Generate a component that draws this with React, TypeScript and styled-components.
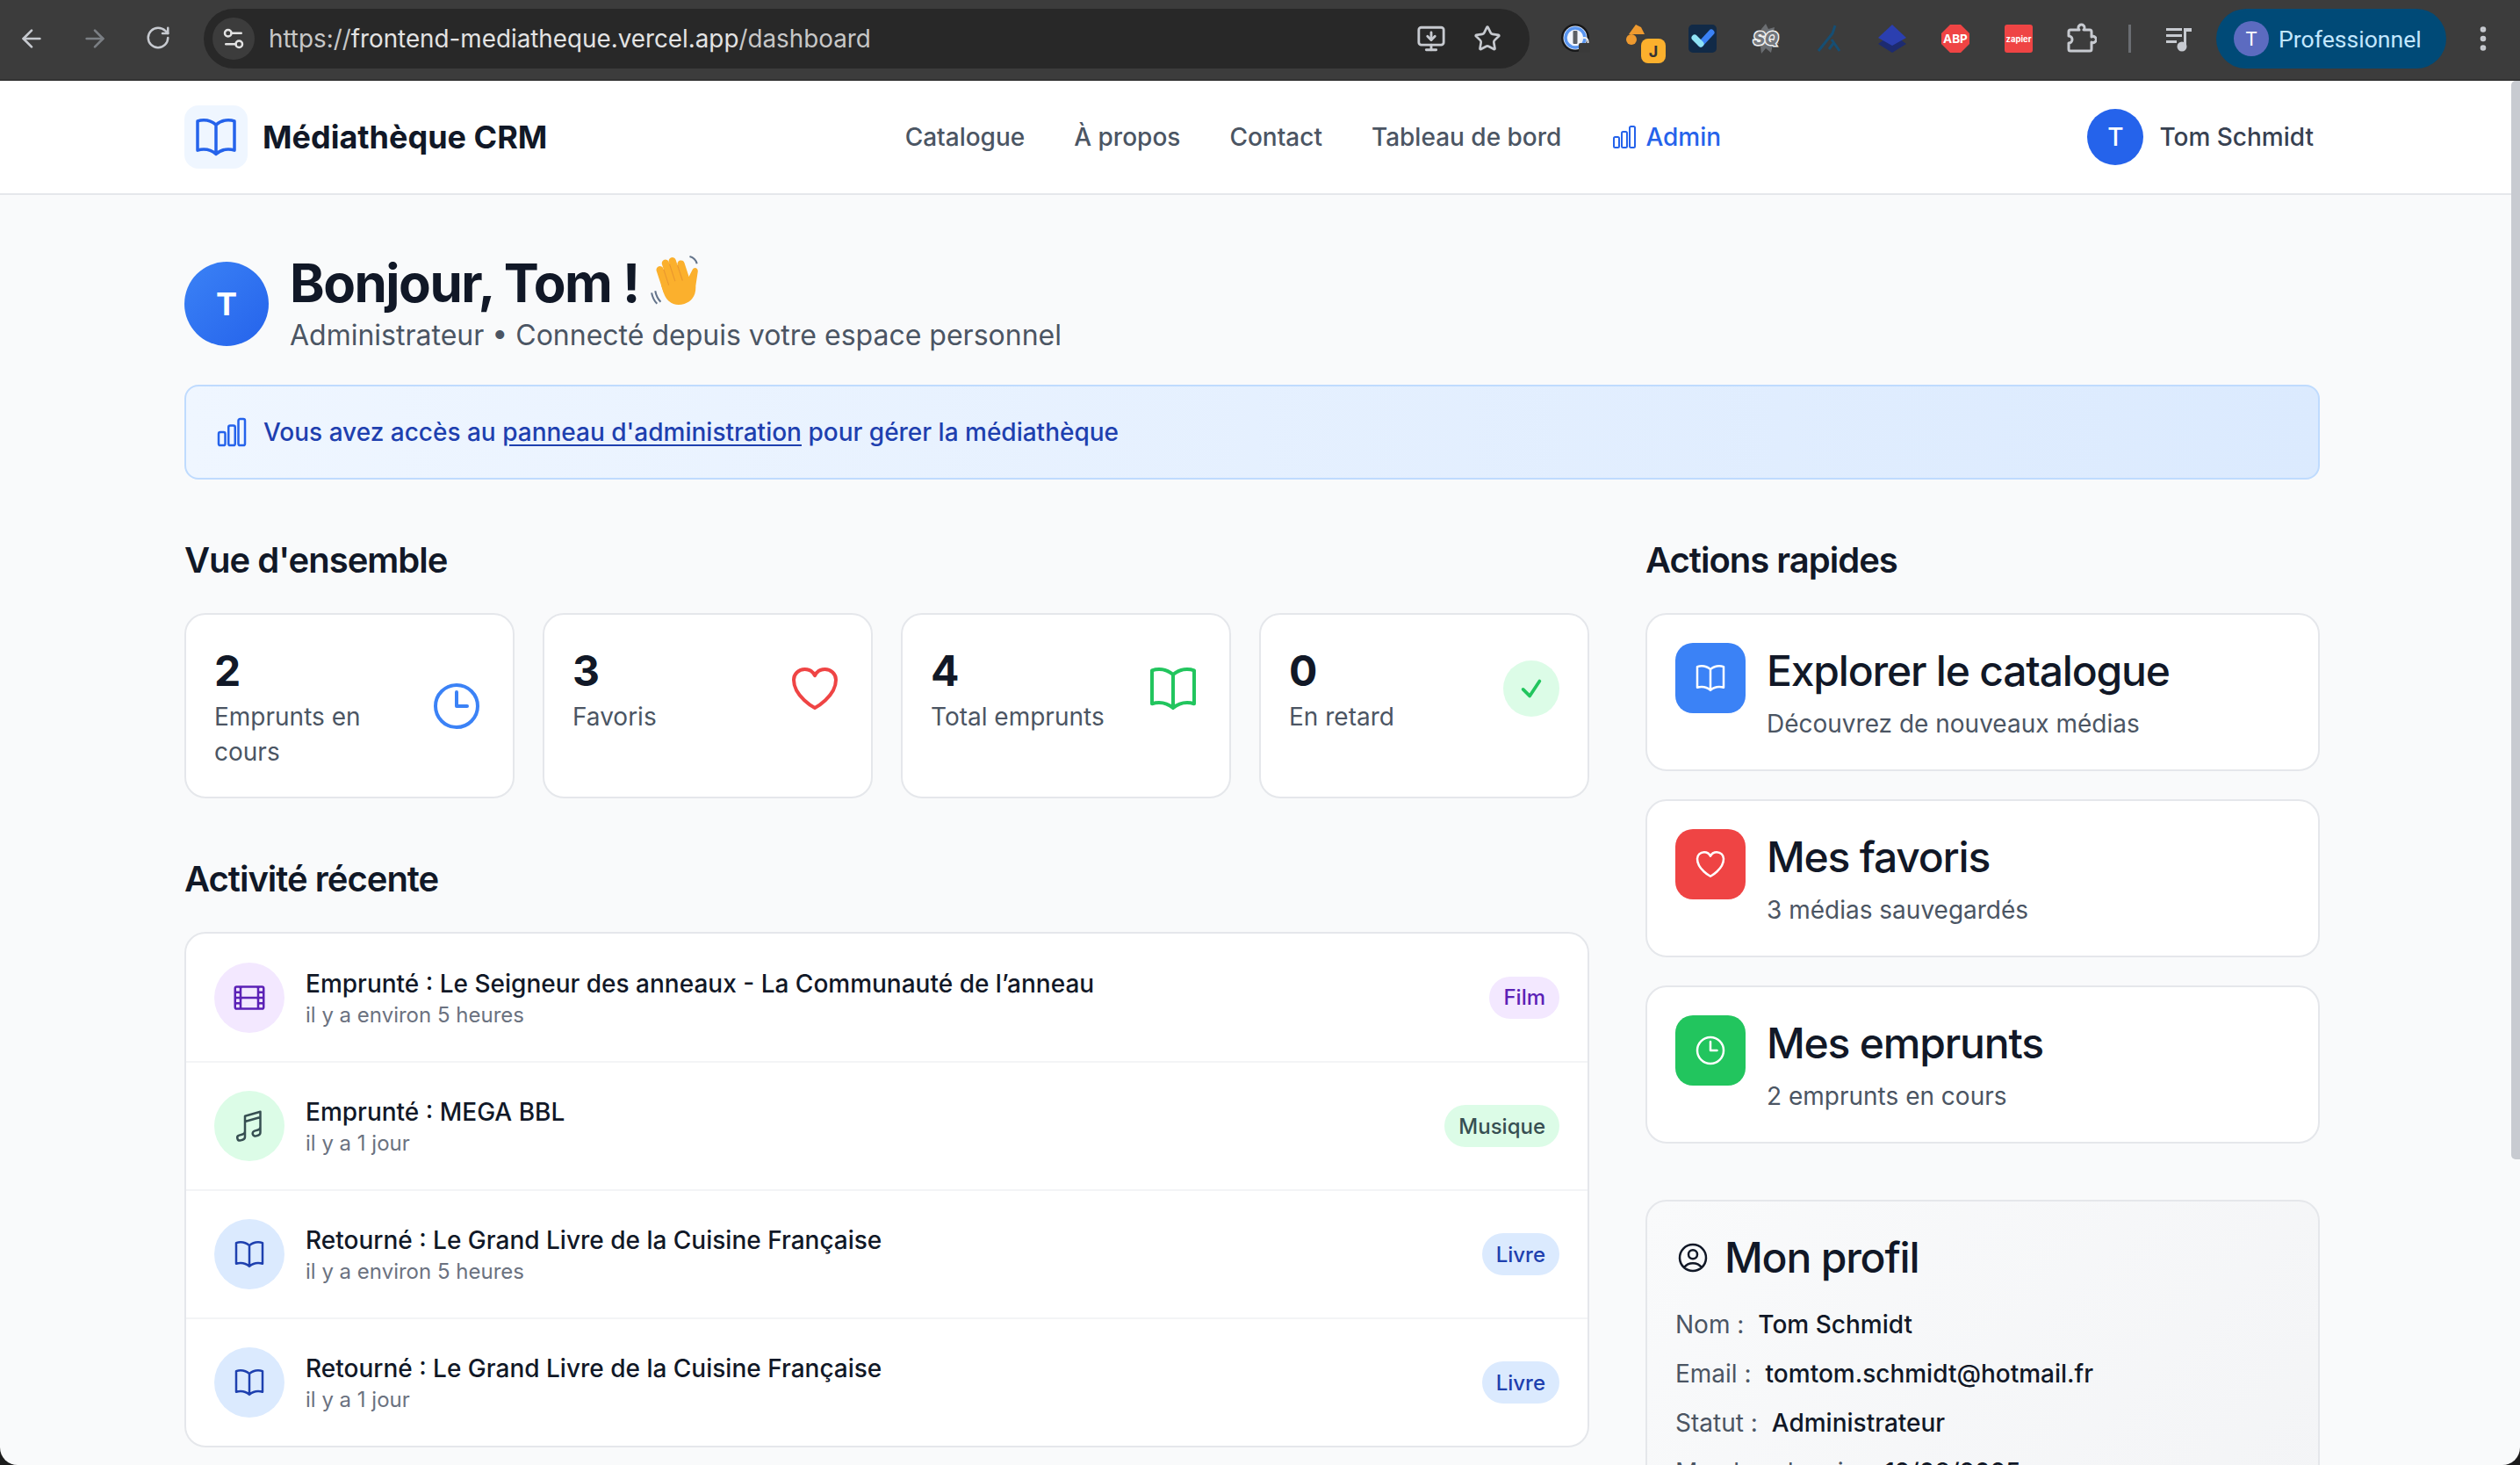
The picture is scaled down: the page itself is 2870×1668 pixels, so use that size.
import React from 'react';
import styled, {createGlobalStyle} from 'styled-components';
import {
  ArrowLeft,
  ArrowRight,
  RotateCw,
  Settings2,
  MonitorDown,
  Star,
  EllipsisVertical,
} from 'lucide-react';
import {
  HiOutlineBookOpen,
  HiOutlineChartBar,
  HiOutlineClock,
  HiOutlineHeart,
  HiOutlineCheck,
  HiOutlineFilm,
  HiOutlineMusicalNote,
  HiOutlineUserCircle,
} from 'react-icons/hi2';

const GlobalStyle = createGlobalStyle`
  html, body {
    margin: 0;
    padding: 0;
    height: 100%;
    background: #1c1c1c;
    overflow: hidden;
  }
  * {
    box-sizing: border-box;
  }
  #root {
    height: 100%;
  }
`;

const Window = styled.div`
  position: relative;
  height: 1668px;
  overflow: hidden;
  border-radius: 0 0 20px 20px;
  background: #f9fafb;
  font-family: Inter, 'Noto Sans', sans-serif;
  color: #111827;
`;

/* browser chrome */

const BrowserBar = styled.div`
  height: 92px;
  background: #3c3c3c;
  border-bottom: 2px solid #333;
  display: flex;
  align-items: center;
  padding: 0 0 2px;
`;

const NavButton = styled.div<{$dim?: boolean}>`
  width: 72px;
  display: flex;
  justify-content: center;
  color: ${(p) => (p.$dim ? '#7b7f84' : '#c7cad0')};
`;

const NavGroup = styled.div`
  display: flex;
  width: 232px;
`;

const Omnibox = styled.div`
  width: 1510px;
  height: 68px;
  border-radius: 34px;
  background: #282828;
  display: flex;
  align-items: center;
  padding: 0 10px;
  color: #c7cad0;
`;

const SiteChip = styled.div`
  width: 48px;
  height: 48px;
  border-radius: 50%;
  background: #3c3c3c;
  display: flex;
  align-items: center;
  justify-content: center;
  color: #e3e3e3;
`;

const UrlText = styled.div`
  margin-left: 16px;
  flex: 1;
  font-size: 27.8px;
  color: #c7c7c7;
  white-space: nowrap;
`;

const UrlHost = styled.span`
  color: #e3e3e3;
`;

const OmniActions = styled.div`
  display: flex;
  align-items: center;
  gap: 31px;
  padding-right: 22px;
`;

const Extensions = styled.div`
  display: flex;
  margin-left: 17px;
`;

const ExtensionSlot = styled.div`
  position: relative;
  width: 72px;
  height: 68px;
  display: flex;
  align-items: center;
  justify-content: center;
  color: #c7cad0;
`;

const Separator = styled.div`
  width: 3px;
  height: 32px;
  margin: 0 18px 0 17px;
  background: #6a6d72;
`;

const MediaSlot = styled.div`
  width: 72px;
  display: flex;
  justify-content: center;
  color: #c7cad0;
`;

const ProfilePill = styled.div`
  width: 262px;
  height: 68px;
  margin-left: 7px;
  border-radius: 34px;
  background: #004a77;
  display: flex;
  align-items: center;
  padding-left: 20px;
  gap: 11px;
  font-size: 26.6px;
  color: #c2e7ff;
  font-family: Roboto, Inter, sans-serif;
`;

const ProfileAvatar = styled.div`
  width: 40px;
  height: 40px;
  border-radius: 50%;
  background: #5c6bc0;
  color: #fff;
  font-size: 22px;
  display: flex;
  align-items: center;
  justify-content: center;
`;

const MenuSlot = styled.div`
  flex: 1;
  display: flex;
  justify-content: center;
  color: #c7cad0;
  padding-right: 0;
`;

const Scrollbar = styled.div`
  position: absolute;
  top: 92px;
  right: 0;
  width: 10px;
  height: 1228px;
  background: #c8cbd1;
  border-radius: 5px 0 0 5px;
`;

/* site header */

const SiteHeader = styled.header`
  height: 130px;
  background: #fff;
  border-bottom: 2px solid #e5e7eb;
`;

const HeaderInner = styled.div`
  width: 2432px;
  height: 128px;
  margin-left: 210px;
  display: flex;
  align-items: center;
  justify-content: space-between;
  padding-right: 7px;
`;

const Brand = styled.div`
  display: flex;
  align-items: center;
  gap: 17px;
`;

const BrandMark = styled.div`
  width: 72px;
  height: 72px;
  border-radius: 16px;
  background: #eff6ff;
  color: #2563eb;
  display: flex;
  align-items: center;
  justify-content: center;
`;

const BrandName = styled.div`
  font-size: 36px;
  font-weight: 700;
  color: #111827;
`;

const Nav = styled.nav`
  display: flex;
  align-items: center;
  gap: 56px;
  margin-left: -10px;
`;

const NavLink = styled.a<{$active?: boolean}>`
  display: flex;
  align-items: center;
  gap: 8px;
  font-size: 28px;
  font-weight: 500;
  color: ${(p) => (p.$active ? '#2563eb' : '#4b5563')};
`;

const UserBlock = styled.div`
  display: flex;
  align-items: center;
  gap: 18px;
  font-size: 28px;
  font-weight: 500;
  color: #374151;
`;

const UserAvatar = styled.div`
  width: 64px;
  height: 64px;
  border-radius: 50%;
  background: #2563eb;
  color: #fff;
  font-size: 28px;
  font-weight: 500;
  display: flex;
  align-items: center;
  justify-content: center;
`;

/* page */

const Main = styled.main`
  width: 2432px;
  margin-left: 210px;
  padding-top: 68px;
`;

const Hero = styled.div`
  display: flex;
  align-items: center;
  gap: 24px;
  height: 112px;
`;

const HeroAvatar = styled.div`
  width: 96px;
  height: 96px;
  border-radius: 50%;
  background: linear-gradient(135deg, #3b82f6, #2563eb);
  color: #fff;
  font-size: 36px;
  font-weight: 700;
  display: flex;
  align-items: center;
  justify-content: center;
`;

const HeroTitle = styled.h1`
  margin: 0;
  height: 64px;
  display: flex;
  align-items: center;
  gap: 12px;
  font-size: 60px;
  line-height: 64px;
  font-weight: 700;
  letter-spacing: -1.5px;
  color: #111827;
`;

const HeroSub = styled.p`
  margin: 8px 0 0;
  font-size: 32px;
  line-height: 40px;
  color: #4b5563;
`;

const Notice = styled.div`
  margin-top: 36px;
  height: 108px;
  border: 2px solid #bfdbfe;
  border-radius: 16px;
  background: linear-gradient(90deg, #eff6ff, #dbeafe);
  display: flex;
  align-items: center;
  gap: 16px;
  padding: 0 32px;
  font-size: 28px;
  font-weight: 500;
  color: #1e40af;
`;

const NoticeIcon = styled.span`
  display: flex;
  color: #2563eb;
`;

const NoticeLink = styled.a`
  text-decoration: underline;
  text-underline-offset: 4px;
`;

const Columns = styled.div`
  margin-top: 64px;
  display: grid;
  grid-template-columns: 1600px 768px;
  gap: 64px;
`;

const SectionTitle = styled.h2<{$spaced?: boolean}>`
  margin: ${(p) => (p.$spaced ? '64px' : '0')} 0 32px;
  font-size: 40px;
  line-height: 56px;
  font-weight: 600;
  letter-spacing: -1px;
  color: #111827;
`;

const StatGrid = styled.div`
  display: grid;
  grid-template-columns: repeat(4, 1fr);
  gap: 32px;
`;

const Card = styled.div`
  background: #fff;
  border: 2px solid #e5e7eb;
  border-radius: 24px;
  padding: 32px 32px 31px;
`;

const StatInner = styled.div`
  display: flex;
  align-items: center;
  justify-content: space-between;
`;

const StatNumber = styled.div`
  font-size: 48px;
  line-height: 64px;
  font-weight: 700;
  color: #111827;
`;

const StatLabel = styled.div`
  font-size: 28px;
  line-height: 40px;
  color: #4b5563;
`;

const StatIcon = styled.div<{$color: string}>`
  flex: none;
  width: 64px;
  height: 64px;
  display: flex;
  align-items: center;
  justify-content: center;
  color: ${(p) => p.$color};
`;

const CheckBadge = styled(StatIcon)`
  border-radius: 50%;
  background: #dcfce7;
`;

const ActivityCard = styled.div`
  background: #fff;
  border: 2px solid #e5e7eb;
  border-radius: 24px;
  overflow: hidden;
`;

const ActivityRow = styled.div`
  display: flex;
  align-items: center;
  gap: 24px;
  height: 146px;
  padding: 0 32px;
  &:first-child {
    height: 145px;
  }
  & + & {
    border-top: 2px solid #f3f4f6;
  }
`;

const ActivityIcon = styled.div<{$bg: string; $fg: string}>`
  flex: none;
  width: 80px;
  height: 80px;
  border-radius: 50%;
  background: ${(p) => p.$bg};
  color: ${(p) => p.$fg};
  display: flex;
  align-items: center;
  justify-content: center;
`;

const ActivityText = styled.div`
  flex: 1;
`;

const ActivityTitle = styled.div`
  font-size: 28px;
  line-height: 40px;
  font-weight: 500;
  color: #111827;
`;

const ActivityTime = styled.div`
  font-size: 24px;
  line-height: 32px;
  color: #6b7280;
`;

const Chip = styled.span<{$bg: string; $fg: string}>`
  height: 48px;
  border-radius: 24px;
  padding: 0 16px;
  background: ${(p) => p.$bg};
  color: ${(p) => p.$fg};
  font-size: 24px;
  font-weight: 500;
  display: flex;
  align-items: center;
`;

const QuickList = styled.div`
  display: flex;
  flex-direction: column;
  gap: 32px;
`;

const QuickCard = styled.div`
  height: 180px;
  background: #fff;
  border: 2px solid #e5e7eb;
  border-radius: 24px;
  padding: 32px;
  display: flex;
  align-items: flex-start;
  gap: 24px;
`;

const QuickIcon = styled.div<{$bg: string}>`
  flex: none;
  width: 80px;
  height: 80px;
  border-radius: 20px;
  background: ${(p) => p.$bg};
  color: #fff;
  display: flex;
  align-items: center;
  justify-content: center;
`;

const QuickTitle = styled.div`
  font-size: 48px;
  line-height: 64px;
  font-weight: 500;
  letter-spacing: -1.2px;
  color: #111827;
`;

const QuickSub = styled.div`
  margin-top: 8px;
  font-size: 28px;
  line-height: 40px;
  color: #4b5563;
`;

const ProfileCard = styled.div`
  margin-top: 64px;
  border: 2px solid #e5e7eb;
  border-radius: 24px;
  padding: 32px;
  background: linear-gradient(135deg, #f9fafb, #f3f4f6);
`;

const ProfileTitle = styled.h3`
  margin: 0 0 24px;
  display: flex;
  align-items: center;
  gap: 16px;
  font-size: 48px;
  line-height: 64px;
  font-weight: 500;
  letter-spacing: -1.2px;
  color: #111827;
`;

const ProfileRow = styled.div`
  display: flex;
  gap: 16px;
  font-size: 28px;
  line-height: 40px;
  margin-bottom: 16px;
  color: #4b5563;
`;

const ProfileValue = styled.span`
  font-weight: 500;
  color: #111827;
`;

/* extension icons, drawn by hand */

const OnePasswordIcon = () => (
  <svg width="36" height="36" viewBox="0 0 36 36">
    <circle cx="17" cy="17" r="16" fill="#17181a" />
    <circle cx="17" cy="17" r="13.5" fill="#f1f5fd" />
    <circle cx="17" cy="17" r="11" fill="none" stroke="#5a96f0" strokeWidth="3.5" />
    <rect x="14.5" y="9" width="5" height="15" rx="1" fill="#5b5f66" />
    <rect x="21" y="23" width="13" height="11" rx="2" fill="#3a3a3a" />
    <path d="M23.5 23v-2a4 4 0 0 1 8 0v2" fill="none" stroke="#eee" strokeWidth="2" />
  </svg>
);

const JiraBadgeIcon = () => (
  <svg width="60" height="60" viewBox="0 0 60 60">
    <path d="M26 14l6 3 4 8H18z" fill="#ef9a2f" />
    <circle cx="21" cy="31" r="6" fill="#ef9a2f" />
    <rect x="30" y="28" width="30" height="30" rx="8" fill="#3c3c3c" />
    <rect x="32" y="30" width="28" height="28" rx="8" fill="#fbb02d" />
    <text x="46" y="51" fontSize="18" fontWeight="700" textAnchor="middle" fill="#333" fontFamily="Inter">
      J
    </text>
  </svg>
);

const TaskIcon = () => (
  <svg width="32" height="32" viewBox="0 0 32 32">
    <rect width="32" height="32" rx="5" fill="#112a47" />
    <path d="M14 22 26 9" stroke="#3b82f6" strokeWidth="7" strokeLinecap="round" />
    <path d="M7 15 14 22" stroke="#8fe3f5" strokeWidth="7" strokeLinecap="round" />
  </svg>
);

const SqIcon = () => (
  <svg width="36" height="34" viewBox="0 0 36 34">
    <path d="M18 0l3 6 7-2-1 6 7 2-4 5 3 6-7 1-2 9-6-5-5 6-1-8-8-1 4-6-3-6 7-1 1-6z" fill="#6b6e72" />
    <text
      x="18"
      y="24"
      fontSize="20"
      fontWeight="800"
      fontStyle="italic"
      textAnchor="middle"
      fill="#74777c"
      stroke="#f0f0f0"
      strokeWidth="3"
      paintOrder="stroke"
      fontFamily="Inter"
    >
      SQ
    </text>
  </svg>
);

const TealGlyphIcon = () => (
  <svg width="28" height="32" viewBox="0 0 28 32" fill="none" stroke="#164e73" strokeWidth="3">
    <path d="M21 1 18 10 2 30" />
    <path d="M17 17 26 30M14 28l6-8" />
  </svg>
);

const LayersIcon = () => (
  <svg width="32" height="32" viewBox="0 0 32 32">
    <path d="M16 10 32 22 16 32 0 22z" fill="#1d2b70" />
    <path d="M16 0 32 15 16 24 0 15z" fill="#2b3fb0" />
  </svg>
);

const AbpIcon = () => (
  <svg width="32" height="32" viewBox="0 0 32 32">
    <path d="M10 0h12l10 10v12L22 32H10L0 22V10z" fill="#ef4444" />
    <text x="16" y="21" fontSize="13.5" fontWeight="700" textAnchor="middle" fill="#fff" fontFamily="Inter">
      ABP
    </text>
  </svg>
);

const ZapierIcon = () => (
  <svg width="32" height="32" viewBox="0 0 32 32">
    <rect width="32" height="32" rx="3" fill="#ef4444" />
    <text x="16" y="20" fontSize="9.5" fontWeight="700" textAnchor="middle" fill="#fff" fontFamily="Inter">
      zapier
    </text>
  </svg>
);

// chrome's extensions button: a tile with a knob on top and right, notch on the left
const PuzzleIcon = () => (
  <svg width="34" height="36" viewBox="0 0 34 36" fill="none" stroke="currentColor" strokeWidth="3" strokeLinejoin="round">
    <path d="M4 8h10a3.5 3.5 0 1 1 5 0h7a2 2 0 0 1 2 2v6a3.5 3.5 0 1 1 0 6v8a2 2 0 0 1-2 2H4a2 2 0 0 1-2-2v-7a4 4 0 0 0 0-8v-5a2 2 0 0 1 2-2z" />
  </svg>
);

const MediaIcon = () => (
  <svg width="32" height="30" viewBox="0 0 32 30" fill="currentColor">
    <rect x="2" y="3" width="18" height="3" />
    <rect x="2" y="10" width="18" height="3" />
    <rect x="2" y="17" width="12" height="3" />
    <path d="M22 3h9v4h-6v17h-3z" />
    <circle cx="20" cy="24" r="5.5" />
  </svg>
);

const WaveHand = () => (
  <svg width="62" height="64" viewBox="0 0 60 62">
    <g transform="rotate(-18 32 32)" fill="#fbb02d">
      <rect x="13" y="7" width="8" height="32" rx="4" />
      <rect x="21" y="2" width="8" height="34" rx="4" />
      <rect x="29" y="2" width="8" height="34" rx="4" />
      <rect x="37" y="8" width="8" height="30" rx="4" />
      <path d="M13 28h32l6-6c3-3 7 0 5 4l-7 14c-3 11-10 15-18 15-12 0-18-9-18-18z" />
      <path d="M21 12v18M29 8v20M37 12v18" stroke="#e8942a" strokeWidth="1" fill="none" />
    </g>
    <path d="M6 40c1 5 3 9 6 12M2 42c1 5 3 9 6 12" stroke="#64748b" strokeWidth="2" fill="none" />
    <path d="M44 2c4 1 7 4 8 8" stroke="#64748b" strokeWidth="2" fill="none" />
  </svg>
);

const extensions = [
  <OnePasswordIcon key="1p" />,
  <JiraBadgeIcon key="jira" />,
  <TaskIcon key="task" />,
  <SqIcon key="sq" />,
  <TealGlyphIcon key="teal" />,
  <LayersIcon key="layers" />,
  <AbpIcon key="abp" />,
  <ZapierIcon key="zapier" />,
  <PuzzleIcon key="puzzle" />,
];

const stats = [
  {value: '2', label: 'Emprunts en cours', color: '#3b82f6', icon: <HiOutlineClock size={64} />},
  {value: '3', label: 'Favoris', color: '#ef4444', icon: <HiOutlineHeart size={64} />},
  {value: '4', label: 'Total emprunts', color: '#22c55e', icon: <HiOutlineBookOpen size={64} />},
];

const bookTone = {bg: '#dbeafe', fg: '#1e40af'};
const activity = [
  {
    title: 'Emprunté : Le Seigneur des anneaux - La Communauté de l’anneau',
    time: 'il y a environ 5 heures',
    chip: 'Film',
    bg: '#f3e8ff',
    fg: '#5b21b6',
    icon: <HiOutlineFilm size={40} />,
  },
  {
    title: 'Emprunté : MEGA BBL',
    time: 'il y a 1 jour',
    chip: 'Musique',
    bg: '#dcfce7',
    fg: '#374f52',
    icon: <HiOutlineMusicalNote size={40} />,
  },
  {
    title: 'Retourné : Le Grand Livre de la Cuisine Française',
    time: 'il y a environ 5 heures',
    chip: 'Livre',
    ...bookTone,
    icon: <HiOutlineBookOpen size={40} />,
  },
  {
    title: 'Retourné : Le Grand Livre de la Cuisine Française',
    time: 'il y a 1 jour',
    chip: 'Livre',
    ...bookTone,
    icon: <HiOutlineBookOpen size={40} />,
  },
];

const quickActions = [
  {title: 'Explorer le catalogue', sub: 'Découvrez de nouveaux médias', bg: '#3b82f6', icon: <HiOutlineBookOpen size={40} />},
  {title: 'Mes favoris', sub: '3 médias sauvegardés', bg: '#ef4444', icon: <HiOutlineHeart size={40} />},
  {title: 'Mes emprunts', sub: '2 emprunts en cours', bg: '#22c55e', icon: <HiOutlineClock size={40} />},
];

const profile = [
  ['Nom :', 'Tom Schmidt'],
  ['Email :', 'tomtom.schmidt@hotmail.fr'],
  ['Statut :', 'Administrateur'],
  ['Membre depuis :', '12/08/2025'],
];

export default function App() {
  return (
    <Window>
      <GlobalStyle />
      <BrowserBar>
        <NavGroup>
          <NavButton>
            <ArrowLeft size={32} strokeWidth={2} />
          </NavButton>
          <NavButton $dim>
            <ArrowRight size={32} strokeWidth={2} />
          </NavButton>
          <NavButton>
            <RotateCw size={30} strokeWidth={2} />
          </NavButton>
        </NavGroup>
        <Omnibox>
          <SiteChip>
            <Settings2 size={30} strokeWidth={2} />
          </SiteChip>
          <UrlText>
            https://<UrlHost>frontend-mediatheque.vercel.app</UrlHost>/dashboard
          </UrlText>
          <OmniActions>
            <MonitorDown size={34} strokeWidth={2} />
            <Star size={32} strokeWidth={2} />
          </OmniActions>
        </Omnibox>
        <Extensions>
          {extensions.map((icon, i) => (
            <ExtensionSlot key={i}>{icon}</ExtensionSlot>
          ))}
        </Extensions>
        <Separator />
        <MediaSlot>
          <MediaIcon />
        </MediaSlot>
        <ProfilePill>
          <ProfileAvatar>T</ProfileAvatar>
          Professionnel
        </ProfilePill>
        <MenuSlot>
          <EllipsisVertical size={36} strokeWidth={2.4} />
        </MenuSlot>
      </BrowserBar>

      <SiteHeader>
        <HeaderInner>
          <Brand>
            <BrandMark>
              <HiOutlineBookOpen size={56} />
            </BrandMark>
            <BrandName>Médiathèque CRM</BrandName>
          </Brand>
          <Nav>
            <NavLink>Catalogue</NavLink>
            <NavLink>À propos</NavLink>
            <NavLink>Contact</NavLink>
            <NavLink>Tableau de bord</NavLink>
            <NavLink $active>
              <HiOutlineChartBar size={32} />
              Admin
            </NavLink>
          </Nav>
          <UserBlock>
            <UserAvatar>T</UserAvatar>
            Tom Schmidt
          </UserBlock>
        </HeaderInner>
      </SiteHeader>

      <Main>
        <Hero>
          <HeroAvatar>T</HeroAvatar>
          <div>
            <HeroTitle>
              Bonjour, Tom !
              <WaveHand />
            </HeroTitle>
            <HeroSub>Administrateur • Connecté depuis votre espace personnel</HeroSub>
          </div>
        </Hero>

        <Notice>
          <NoticeIcon>
            <HiOutlineChartBar size={40} />
          </NoticeIcon>
          <span>
            Vous avez accès au <NoticeLink>panneau d'administration</NoticeLink> pour gérer la médiathèque
          </span>
        </Notice>

        <Columns>
          <div>
            <SectionTitle>Vue d'ensemble</SectionTitle>
            <StatGrid>
              {stats.map((s) => (
                <Card key={s.label}>
                  <StatInner>
                    <div>
                      <StatNumber>{s.value}</StatNumber>
                      <StatLabel>{s.label}</StatLabel>
                    </div>
                    <StatIcon $color={s.color}>{s.icon}</StatIcon>
                  </StatInner>
                </Card>
              ))}
              <Card>
                <StatInner>
                  <div>
                    <StatNumber>0</StatNumber>
                    <StatLabel>En retard</StatLabel>
                  </div>
                  <CheckBadge $color="#22c55e">
                    <HiOutlineCheck size={30} strokeWidth={3} />
                  </CheckBadge>
                </StatInner>
              </Card>
            </StatGrid>

            <SectionTitle $spaced>Activité récente</SectionTitle>
            <ActivityCard>
              {activity.map((a, i) => (
                <ActivityRow key={i}>
                  <ActivityIcon $bg={a.bg} $fg={a.fg}>
                    {a.icon}
                  </ActivityIcon>
                  <ActivityText>
                    <ActivityTitle>{a.title}</ActivityTitle>
                    <ActivityTime>{a.time}</ActivityTime>
                  </ActivityText>
                  <Chip $bg={a.bg} $fg={a.fg}>
                    {a.chip}
                  </Chip>
                </ActivityRow>
              ))}
            </ActivityCard>
          </div>

          <div>
            <SectionTitle>Actions rapides</SectionTitle>
            <QuickList>
              {quickActions.map((q) => (
                <QuickCard key={q.title}>
                  <QuickIcon $bg={q.bg}>{q.icon}</QuickIcon>
                  <div>
                    <QuickTitle>{q.title}</QuickTitle>
                    <QuickSub>{q.sub}</QuickSub>
                  </div>
                </QuickCard>
              ))}
            </QuickList>
            <ProfileCard>
              <ProfileTitle>
                <HiOutlineUserCircle size={40} />
                Mon profil
              </ProfileTitle>
              {profile.map(([label, value]) => (
                <ProfileRow key={label}>
                  {label}
                  <ProfileValue>{value}</ProfileValue>
                </ProfileRow>
              ))}
            </ProfileCard>
          </div>
        </Columns>
      </Main>
      <Scrollbar />
    </Window>
  );
}
